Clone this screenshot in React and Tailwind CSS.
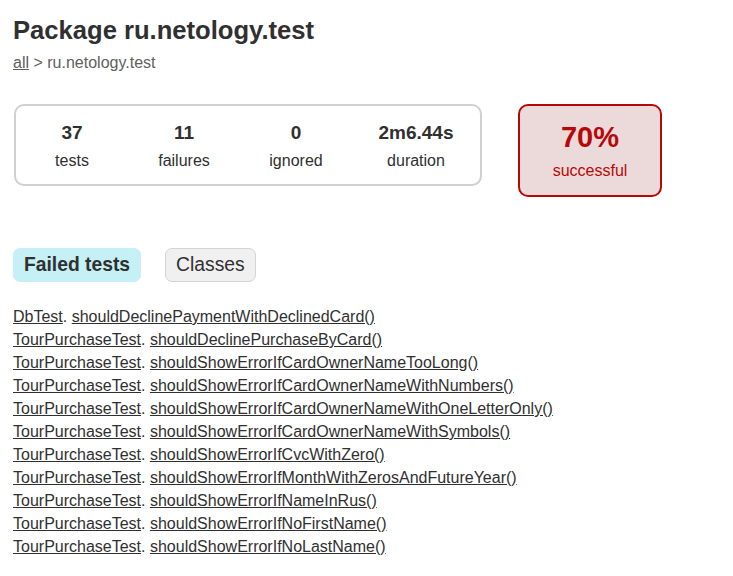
import React from "react";

const stats = [
  { value: "37", label: "tests", w: "w-[112px]" },
  { value: "11", label: "failures", w: "w-[112px]" },
  { value: "0", label: "ignored", w: "w-[112px]" },
  { value: "2m6.44s", label: "duration", w: "w-[128px]" },
];

const failed = [
  ["DbTest", "shouldDeclinePaymentWithDeclinedCard()"],
  ["TourPurchaseTest", "shouldDeclinePurchaseByCard()"],
  ["TourPurchaseTest", "shouldShowErrorIfCardOwnerNameTooLong()"],
  ["TourPurchaseTest", "shouldShowErrorIfCardOwnerNameWithNumbers()"],
  ["TourPurchaseTest", "shouldShowErrorIfCardOwnerNameWithOneLetterOnly()"],
  ["TourPurchaseTest", "shouldShowErrorIfCardOwnerNameWithSymbols()"],
  ["TourPurchaseTest", "shouldShowErrorIfCvcWithZero()"],
  ["TourPurchaseTest", "shouldShowErrorIfMonthWithZerosAndFutureYear()"],
  ["TourPurchaseTest", "shouldShowErrorIfNameInRus()"],
  ["TourPurchaseTest", "shouldShowErrorIfNoFirstName()"],
  ["TourPurchaseTest", "shouldShowErrorIfNoLastName()"],
];

export default function App() {
  return (
    <div className="min-h-[576px] bg-white px-[13px] pt-[15px] font-['Liberation_Sans',Arial,sans-serif] text-[16px] text-[#303030]">
      <h1 className="text-[25.6px] font-bold leading-[30px]">
        Package ru.netology.test
      </h1>
      <div className="mt-[9px] leading-[18px] text-[#606060]">
        <a href="#" className="underline">
          all
        </a>{" "}
        &gt; ru.netology.test
      </div>

      {/* summary */}
      <div className="mt-[32px] flex items-start">
        <div className="ml-px flex rounded-[10px] border-2 border-[#d0d0d0]">
          {stats.map((s) => (
            <div key={s.label} className={`${s.w} pt-[16px] pb-[14px] text-center`}>
              <div className="mb-[8px] text-[19px] font-bold leading-[22px]">
                {s.value}
              </div>
              <div className="leading-[18px]">{s.label}</div>
            </div>
          ))}
        </div>
        <div className="ml-[36px] w-[144px] rounded-[10px] border-2 border-[#b60808] bg-[#ecdada] py-[15px] text-center text-[#b60808]">
          <div className="mb-[8px] text-[29px] font-bold leading-[33px]">
            70%
          </div>
          <div className="leading-[18px]">successful</div>
        </div>
      </div>

      {/* tabs */}
      <div className="mt-[51px] flex">
        <div className="mr-[24px] rounded-[7px] border border-[#c5f0f5] bg-[#c5f0f5] px-[10px] py-[5px] text-[19.3px] font-bold leading-[22px]">
          Failed tests
        </div>
        <div className="rounded-[7px] border border-[#d4d4d4] bg-[#f0f0f0] px-[10px] py-[5px] text-[19.3px] leading-[22px]">
          Classes
        </div>
      </div>

      <ul className="mt-[26px]">
        {failed.map(([cls, method], i) => (
          <li key={i} className="mb-[5px] leading-[18px]">
            <a href="#" className="underline">
              {cls}
            </a>
            .{" "}
            <a href="#" className="underline">
              {method}
            </a>
          </li>
        ))}
      </ul>
    </div>
  );
}
